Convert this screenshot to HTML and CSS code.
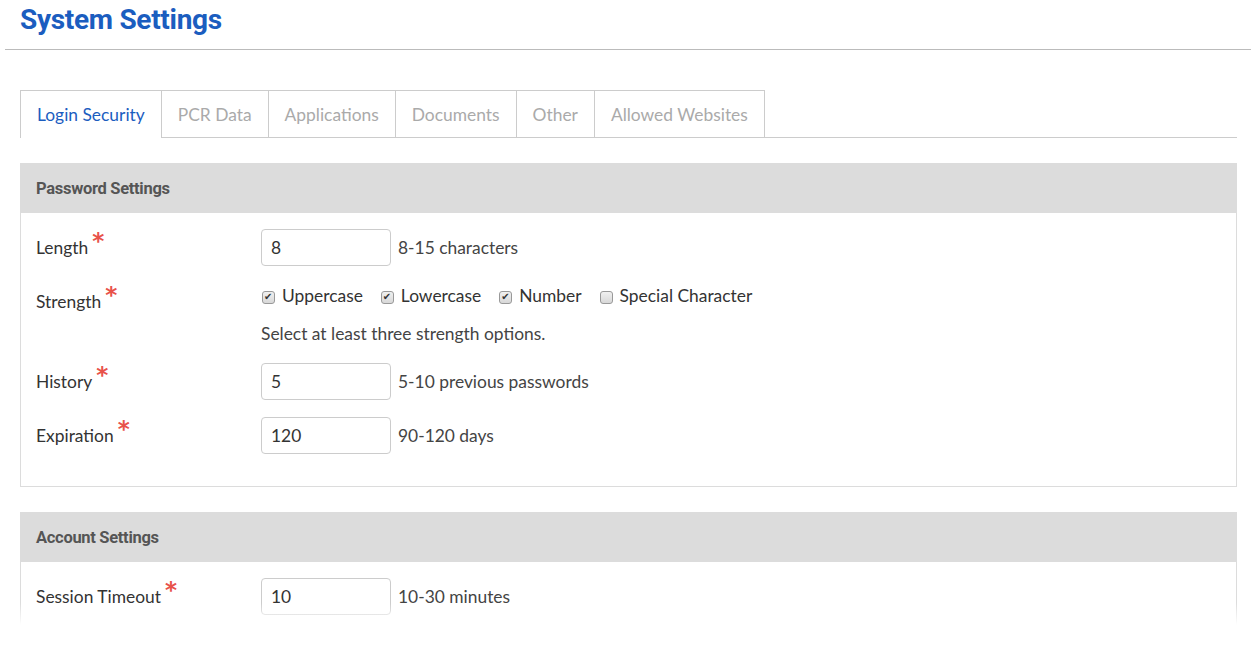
FILE: index.html
```
<!DOCTYPE html>
<html lang="en">
<head>
  <meta charset="UTF-8">
  <title>System Settings</title>
  <meta name="viewport" content="width=device-width, initial-scale=1.0">
  <link rel="stylesheet" href="styles.css">
</head>
<body>
<div class="page-header">
  <h1 class="page-title">System Settings</h1>
</div>

<div class="page-content">
  <ul class="tabs">
    <li class="tab active">Login Security</li>
    <li class="tab">PCR Data</li>
    <li class="tab">Applications</li>
    <li class="tab">Documents</li>
    <li class="tab">Other</li>
    <li class="tab">Allowed Websites</li>
  </ul>

  <div class="panel">
    <div class="panel-heading">Password Settings</div>
    <div class="panel-body">
      <div class="form-row">
        <label class="form-label">Length<span class="req">*</span></label>
        <div class="form-field">
          <input type="text" class="text-input" value="8">
          <span class="field-hint">8-15 characters</span>
        </div>
      </div>

      <div class="form-row form-row-top">
        <label class="form-label">Strength<span class="req">*</span></label>
        <div class="form-field-stack">
          <div class="check-line">
            <label class="check"><span class="box checked"></span>Uppercase</label>
            <label class="check"><span class="box checked"></span>Lowercase</label>
            <label class="check"><span class="box checked"></span>Number</label>
            <label class="check"><span class="box"></span>Special Character</label>
          </div>
          <div class="check-help">Select at least three strength options.</div>
        </div>
      </div>

      <div class="form-row">
        <label class="form-label">History<span class="req">*</span></label>
        <div class="form-field">
          <input type="text" class="text-input" value="5">
          <span class="field-hint">5-10 previous passwords</span>
        </div>
      </div>

      <div class="form-row">
        <label class="form-label">Expiration<span class="req">*</span></label>
        <div class="form-field">
          <input type="text" class="text-input" value="120">
          <span class="field-hint">90-120 days</span>
        </div>
      </div>
    </div>
  </div>

  <div class="panel">
    <div class="panel-heading">Account Settings</div>
    <div class="panel-body">
      <div class="form-row">
        <label class="form-label">Session Timeout<span class="req">*</span></label>
        <div class="form-field">
          <input type="text" class="text-input" value="10">
          <span class="field-hint">10-30 minutes</span>
        </div>
      </div>
    </div>
  </div>
</div>
</body>
</html>
```

FILE: styles.css
```
html, body {
  margin: 0;
  background: #fff;
  font-family: Lato, 'Open Sans', Arial, sans-serif;
  color: #333;
  overflow: hidden;
}

.page-header {
  height: 49px;
  margin-left: 5px;
  padding-left: 15px;
  border-bottom: 1px solid #bbb;
}
.page-title {
  margin: 0;
  font-family: Roboto, Arial, sans-serif;
  font-size: 28px;
  line-height: 40px;
  font-weight: 700;
  color: #1b5dbf;
  letter-spacing: -0.3px;
}

.page-content {
  position: relative;
  height: 575px;
  overflow: hidden;
  padding: 40px 14px 0 20px;
  box-sizing: border-box;
}
.page-content::after {
  content: '';
  position: absolute;
  left: 0;
  right: 0;
  bottom: 0;
  height: 22px;
  background: linear-gradient(rgba(255,255,255,0), #fff);
}

.tabs {
  display: flex;
  list-style: none;
  margin: 0;
  padding: 0;
  border-bottom: 1px solid #ccc;
}
.tab {
  height: 46px;
  line-height: 47px;
  padding: 0 16px;
  font-size: 17.4px;
  color: #aaa;
  border: 1px solid #ccc;
  border-bottom: none;
  border-left: none;
}
.tab:first-child { border-left: 1px solid #ccc; }
.tab.active {
  color: #1b5dbf;
  background: #fff;
  margin-bottom: -1px;
  height: 47px;
}

.panel {
  margin-top: 25px;
  border: 1px solid #dcdcdc;
}
.panel-heading {
  height: 50px;
  line-height: 52px;
  margin-top: -1px;
  padding-left: 15px;
  background: #dcdcdc;
  font-family: Roboto, Arial, sans-serif;
  font-size: 16.5px;
  font-weight: 700;
  color: #555;
  letter-spacing: -0.3px;
}
.panel-body {
  padding: 16px 15px 15px;
}

.form-row {
  display: flex;
  align-items: center;
  min-height: 37px;
  margin-bottom: 17px;
}
.form-row-top {
  align-items: flex-start;
  margin-bottom: 16px;
}
.form-row-top .form-label {
  line-height: 37px;
}
.form-label {
  width: 225px;
  flex: none;
  font-size: 17.4px;
  color: #333;
}
.req {
  margin-left: 4px;
  color: #e8524a;
  font-family: 'DejaVu Sans', sans-serif;
  font-weight: 700;
  font-size: 23px;
  line-height: 0;
  vertical-align: 5px;
}

.form-field {
  display: flex;
  align-items: center;
}
.text-input {
  width: 130px;
  height: 37px;
  box-sizing: border-box;
  padding: 0 9px;
  border: 1px solid #ccc;
  border-radius: 4px;
  font-family: Lato, Arial, sans-serif;
  font-size: 17.4px;
  color: #333;
  outline: none;
}
.field-hint {
  margin-left: 7px;
  font-size: 17.4px;
  color: #444;
}

.check-line {
  display: flex;
  align-items: center;
  height: 25px;
}
.check {
  display: flex;
  align-items: center;
  margin-right: 17px;
  font-size: 17.4px;
  color: #333;
}
.box {
  position: relative;
  width: 11px;
  height: 11px;
  margin: 3px 7px 0 1px;
  border: 1px solid #999;
  border-radius: 3px;
  background: linear-gradient(#f0f0f0, #d8d8d8);
}
.box.checked::after {
  content: '\2714';
  position: absolute;
  left: 1px;
  top: -1px;
  font-family: 'DejaVu Sans', sans-serif;
  font-size: 10px;
  line-height: 12px;
  color: #333;
}
.check-help {
  margin-top: 13px;
  line-height: 26px;
  font-size: 17.4px;
  color: #444;
}
```
